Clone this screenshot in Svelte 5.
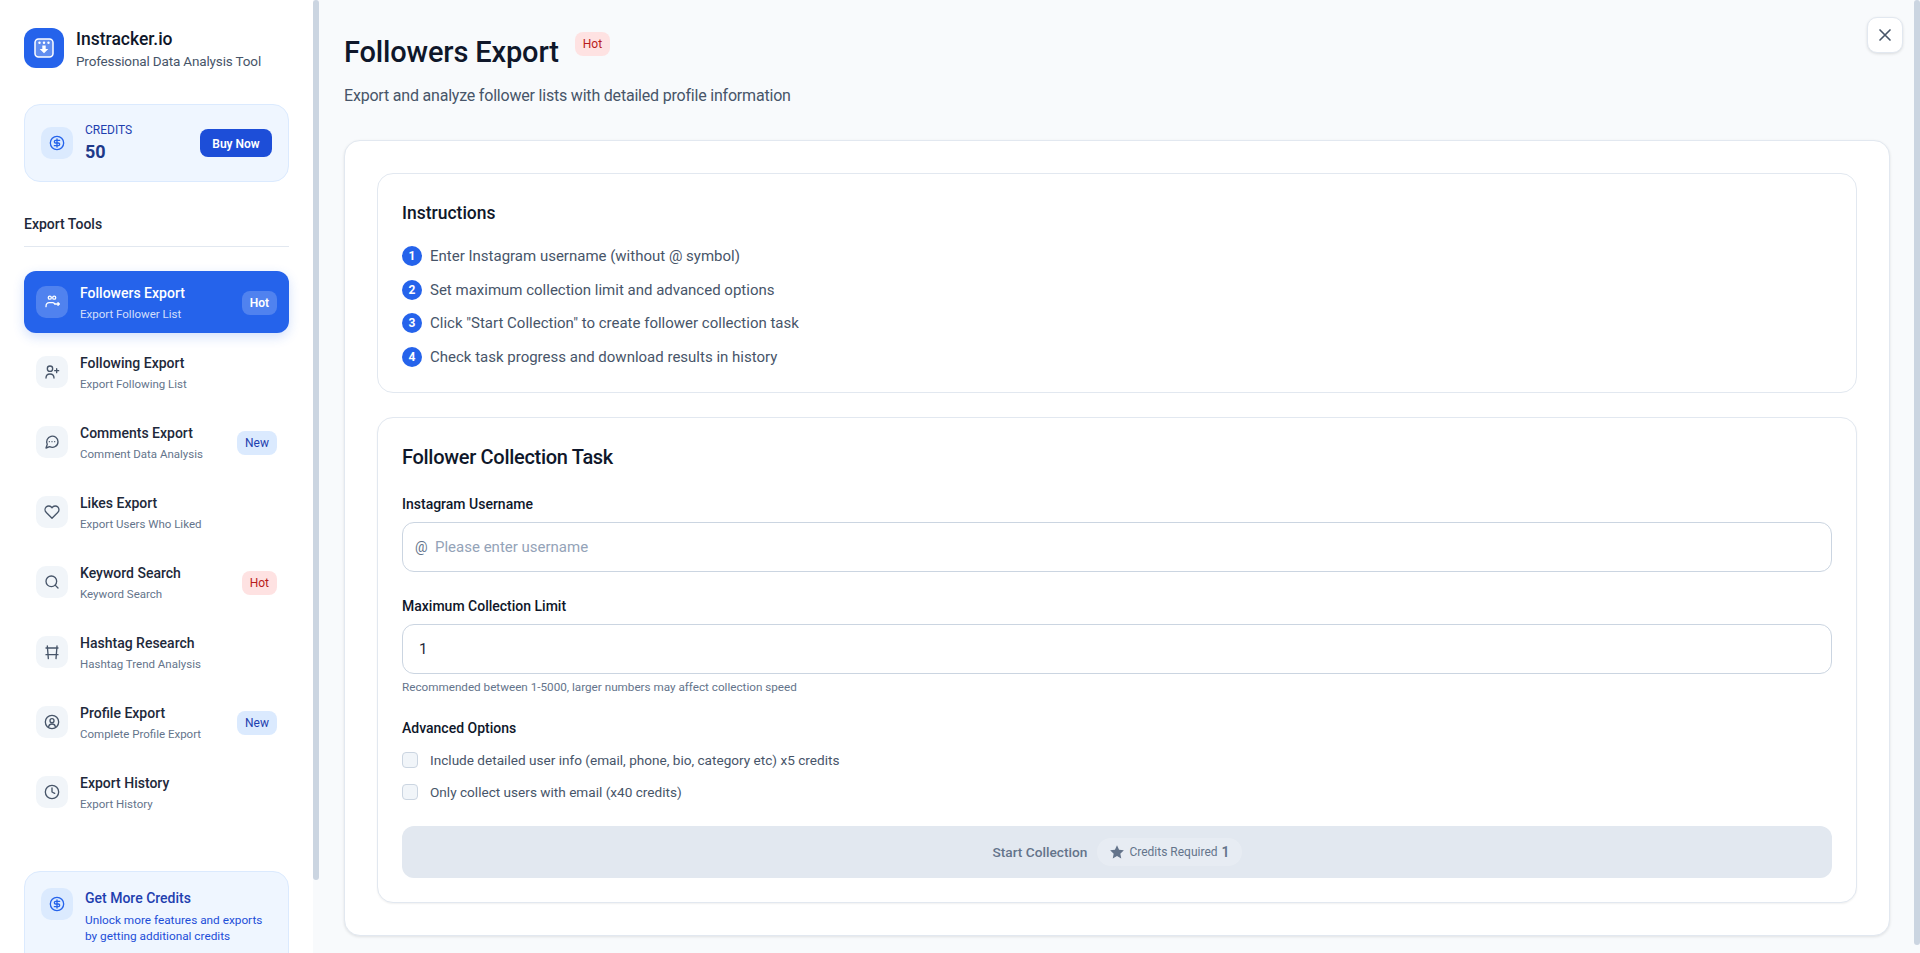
<script>
  const dollar = ['M22 12a10 10 0 1 1-20 0a10 10 0 1 1 20 0', 'M16 8h-6a2 2 0 1 0 0 4h4a2 2 0 1 1 0 4H8', 'M12 18V6'];
  const items = [
    { t: 'Followers Export', s: 'Export Follower List', b: 'Hot', k: 'glass', active: true, d: ['M11 5.500a2.300 2.300 0 1 1-4.600 0a2.300 2.300 0 1 1 4.600 0', 'M17.600 5.500a2.300 2.300 0 1 1-4.600 0a2.300 2.300 0 1 1 4.600 0', 'M3 19c0-4 2-6 5-6h5c1 0 2 .5 3 1.500', 'M16 15h7M21 13l2 2-2 2'] },
    { t: 'Following Export', s: 'Export Following List', d: ['M15 21c0-3.500-2.500-6-6-6s-6 2.500-6 6', 'M13 7a4 4 0 1 1-8 0a4 4 0 1 1 8 0', 'M19 7v6M16 10h6'] },
    { t: 'Comments Export', s: 'Comment Data Analysis', b: 'New', k: 'new', d: ['M21 11.500a8.500 8.500 0 0 1-12.500 7.500L3 21l1.900-5.500A8.500 8.500 0 1 1 21 11.500z', 'M8 11.500h.01M12 11.500h.01M16 11.500h.01'] },
    { t: 'Likes Export', s: 'Export Users Who Liked', d: ['M20.800 4.600a5.500 5.500 0 0 0-7.800 0L12 5.700l-1-1.100a5.500 5.500 0 0 0-7.800 7.800l1 1.100L12 21.300l7.800-7.800 1-1.100a5.500 5.500 0 0 0 0-7.800z'] },
    { t: 'Keyword Search', s: 'Keyword Search', b: 'Hot', k: 'hot', d: ['M19 11a8 8 0 1 1-16 0a8 8 0 1 1 16 0', 'M21 21l-4.300-4.300'] },
    { t: 'Hashtag Research', s: 'Hashtag Trend Analysis', d: ['M3 6h18M3 16h18M5 3l1.500 19M19.500 3L18 22'] },
    { t: 'Profile Export', s: 'Complete Profile Export', b: 'New', k: 'new', d: ['M22 12a10 10 0 1 1-20 0a10 10 0 1 1 20 0', 'M15 10a3 3 0 1 1-6 0a3 3 0 1 1 6 0', 'M7 19c.5-2.500 2.500-4 5-4s4.500 1.500 5 4'] },
    { t: 'Export History', s: 'Export History', d: ['M22 12a10 10 0 1 1-20 0a10 10 0 1 1 20 0', 'M12 6v6l4 2'] }
  ];
  const steps = [
    'Enter Instagram username (without @ symbol)',
    'Set maximum collection limit and advanced options',
    'Click "Start Collection" to create follower collection task',
    'Check task progress and download results in history'
  ];
</script>

{#snippet icon(paths, cls = 'ico')}
  <svg class={cls} viewBox="0 0 24 24" fill="none" stroke="currentColor" stroke-width="2" stroke-linecap="round" stroke-linejoin="round" aria-hidden="true">
    {#each paths as p}<path d={p} />{/each}
  </svg>
{/snippet}

<div class="app">
  <aside class="side">
    <div class="side-in">
      <div class="brand">
        <div class="logo">
          <svg viewBox="0 0 20 20" width="20" height="20" aria-hidden="true">
            <rect x="1" y="1" width="18" height="18" rx="3.500" fill="#fff" fill-opacity=".28" stroke="#fff" stroke-width="1.500" />
            <circle cx="5.500" cy="4.800" r="1.200" fill="#fff" /><circle cx="10" cy="4.800" r="1.200" fill="#fff" /><circle cx="14.500" cy="4.800" r="1.200" fill="#fff" />
            <path d="M8.300 7.500h3.400v3.500h2.600L10 15.300 5.700 11h2.600z" fill="#fff" />
          </svg>
        </div>
        <div class="brand-t">
          <div class="name">Instracker.io</div>
          <div class="tag">Professional Data Analysis Tool</div>
        </div>
      </div>

      <div class="credits">
        <div class="cr-ico">{@render icon(dollar)}</div>
        <div class="cr-txt">
          <div class="cr-label">CREDITS</div>
          <div class="cr-num">50</div>
        </div>
        <button class="buy">Buy Now</button>
      </div>

      <div class="sec">Export Tools</div>

      <nav class="nav">
        {#each items as it}
          <div class="item" class:active={it.active}>
            <div class="it-ico">{@render icon(it.d)}</div>
            <div class="it-txt">
              <div class="it-t">{it.t}</div>
              <div class="it-s">{it.s}</div>
            </div>
            {#if it.b}<span class="badge {it.k}">{it.b}</span>{/if}
          </div>
        {/each}
      </nav>

      <div class="more">
        <div class="cr-ico">{@render icon(dollar)}</div>
        <div>
          <div class="more-t">Get More Credits</div>
          <div class="more-d">Unlock more features and exports by getting additional credits</div>
        </div>
      </div>
    </div>
    <div class="track"><div class="thumb side-thumb"></div></div>
  </aside>

  <main class="main">
    <button class="close" aria-label="Close">
      <svg viewBox="0 0 24 24" width="20" height="20" fill="none" stroke="currentColor" stroke-width="2" stroke-linecap="round" aria-hidden="true"><path d="M18 6L6 18M6 6l12 12" /></svg>
    </button>
    <header class="head">
      <div class="title-row">
        <h1>Followers Export</h1>
        <span class="badge hot">Hot</span>
      </div>
      <p class="lead">Export and analyze follower lists with detailed profile information</p>
    </header>

    <section class="outer">
      <div class="panel instr">
        <h3>Instructions</h3>
        <ol>
          {#each steps as s, i}
            <li><span class="num">{i + 1}</span><span>{s}</span></li>
          {/each}
        </ol>
      </div>

      <div class="panel form">
        <h2>Follower Collection Task</h2>
        <label class="lbl" for="u">Instagram Username</label>
        <div class="field">
          <span class="at">@</span>
          <input id="u" class="inp with-at" placeholder="Please enter username" />
        </div>
        <label class="lbl second" for="m">Maximum Collection Limit</label>
        <div class="field"><input id="m" class="inp" value="1" /></div>
        <div class="help">Recommended between 1-5000, larger numbers may affect collection speed</div>
        <div class="lbl adv">Advanced Options</div>
        <label class="chk"><input type="checkbox" /><span>Include detailed user info (email, phone, bio, category etc) x5 credits</span></label>
        <label class="chk"><input type="checkbox" /><span>Only collect users with email (x40 credits)</span></label>
        <button class="start">
          <span>Start Collection</span>
          <span class="pill">
            <svg viewBox="0 0 24 24" width="16" height="16" fill="currentColor" aria-hidden="true"><path d="M12 2l3.100 6.600 7.200.9-5.300 5 1.400 7.100L12 18.100l-6.400 3.500L7 14.500l-5.300-5 7.200-.9z" /></svg>
            <span class="pill-t">Credits Required</span>
            <b>1</b>
          </span>
        </button>
      </div>
    </section>
    <div class="track main-track"><div class="thumb main-thumb"></div></div>
  </main>
</div>

<style>
  :global(body) { margin: 0; font-family: Roboto, "Noto Sans", sans-serif; background: #f8fafc; color: #0f172a; overflow: hidden; }
  * { box-sizing: border-box; }
  button, input { font-family: inherit; }
  .app { display: flex; height: 953px; }

  .side { position: relative; width: 320px; flex: none; height: 100%; background: #fff; overflow: hidden; }
  .side-in { padding: 28px 24px 24px 24px; width: 313px; }
  .track { position: absolute; top: 0; right: 0; bottom: 0; width: 7px; background: #f8fafc; }
  .main-track { width: 6px; }
  .thumb { width: 6px; background: #cbd5e1; border-radius: 3px; }
  .side-thumb { height: 880px; }
  .main-thumb { height: 945px; }

  .brand { display: flex; align-items: center; gap: 12px; height: 40px; }
  .brand-t { padding-top: 2px; }
  .logo { width: 40px; height: 40px; border-radius: 12px; background: #2563eb; display: flex; align-items: center; justify-content: center; }
  .name { font-size: 17.500px; font-weight: 500; line-height: 24px; color: #0f172a; }
  .tag { font-size: 13.500px; letter-spacing: -.15px; line-height: 20px; color: #475569; }

  .credits { margin-top: 36px; height: 78px; border: 1px solid #dbeafe; border-radius: 16px; background: #eff6ff; display: flex; align-items: center; padding: 0 16px; }
  .cr-ico { width: 32px; height: 32px; flex: none; border-radius: 10px; background: #dbeafe; color: #2563eb; display: flex; align-items: center; justify-content: center; }
  .cr-txt { margin-left: 12px; flex: 1; }
  .cr-label { font-size: 12px; line-height: 16px; color: #1e40af; }
  .cr-num { font-size: 18px; font-weight: 700; line-height: 24px; margin-top: 2px; color: #1e3a8a; }
  .buy { width: 72px; height: 28px; border: 0; border-radius: 8px; background: #1d4ed8; color: #fff; font-weight: 600; font-size: 12px; padding: 1px 0 0; }

  .sec { margin-top: 32px; font-size: 14px; font-weight: 500; line-height: 20px; color: #1e293b; padding-bottom: 12px; border-bottom: 1px solid #e2e8f0; }
  .nav { margin-top: 24px; display: flex; flex-direction: column; gap: 8px; }
  .item { height: 62px; border-radius: 12px; display: flex; align-items: center; padding: 0 12px; }
  .item.active { background: #2563eb; color: #fff; box-shadow: 0 4px 12px rgba(37, 99, 235, .2); }
  .it-ico { width: 32px; height: 32px; flex: none; border-radius: 10px; background: #f1f5f9; color: #475569; display: flex; align-items: center; justify-content: center; }
  .active .it-ico { background: rgba(255, 255, 255, .2); color: #fff; }
  .ico { width: 16px; height: 16px; }
  .it-txt { margin-left: 12px; flex: 1; min-width: 0; }
  .it-t { font-size: 14px; font-weight: 500; line-height: 20px; color: #1e293b; }
  .it-s { font-size: 11.500px; line-height: 16px; margin-top: 3px; color: #64748b; }
  .active .it-t { color: #fff; }
  .active .it-s { color: rgba(255, 255, 255, .8); }

  .badge { font-size: 12px; font-weight: 400; line-height: 24px; height: 24px; padding: 0 8px; border-radius: 8px; flex: none; }
  .item .badge { margin-top: 2px; }
  .glass { background: rgba(255, 255, 255, .2); color: #fff; font-weight: 600; }
  .new { background: #dbeafe; color: #1e40af; }
  .hot { background: #fee2e2; color: #b91c1c; }

  .more { margin-top: 48px; height: 160px; border: 1px solid #dbeafe; border-radius: 16px; background: #eff6ff; display: flex; gap: 12px; padding: 16px; }
  .more-t { font-size: 14px; font-weight: 500; line-height: 20px; color: #1e40af; }
  .more-d { margin-top: 4px; font-size: 11.800px; line-height: 16px; color: #1d4ed8; }

  .main { flex: 1; min-width: 0; height: 100%; overflow: hidden; padding: 24px 30px 24px 24px; position: relative; background: #f8fafc; }
  .close { position: absolute; top: 17px; right: 17px; width: 36px; height: 36px; border-radius: 10px; background: #fff; border: 1px solid #e2e8f0; box-shadow: 0 1px 3px rgba(0, 0, 0, .12); color: #475569; padding: 0; display: flex; align-items: center; justify-content: center; }
  .head { height: 116px; padding-top: 8px; }
  .title-row { display: flex; align-items: flex-start; gap: 16px; height: 36px; }
  h1 { margin: 1px 0 0; font-size: 29px; letter-spacing: -.15px; font-weight: 500; line-height: 38px; color: #0f172a; }
  .lead { margin: 16px 0 0; font-size: 16px; letter-spacing: -.2px; line-height: 24px; color: #475569; }

  .outer { border: 1px solid #e2e8f0; border-radius: 16px; background: #fff; box-shadow: 0 1px 3px rgba(0, 0, 0, .1); padding: 32px; }
  .panel { border: 1px solid #e2e8f0; border-radius: 16px; background: #fff; padding: 24px; }
  .instr { height: 220px; margin-bottom: 24px; }
  h3 { margin: 1px 0 -1px; font-size: 17.500px; font-weight: 500; line-height: 28px; color: #0f172a; }
  ol { list-style: none; margin: 18px 0 0; padding: 0; display: flex; flex-direction: column; gap: 9.600px; }
  li { display: flex; align-items: center; gap: 8px; font-size: 15px; line-height: 24px; color: #475569; }
  .num { width: 20px; height: 20px; border-radius: 50%; background: #2563eb; color: #fff; font-size: 12px; font-weight: 700; display: flex; align-items: center; justify-content: center; }

  .form { height: 486px; box-shadow: 0 1px 2px rgba(0, 0, 0, .06); }
  h2 { margin: 1px 0 0; font-size: 20px; letter-spacing: -.3px; font-weight: 500; line-height: 28px; color: #0f172a; }
  .lbl { display: block; font-size: 14px; font-weight: 500; line-height: 20px; color: #0f172a; margin-top: 23px; margin-bottom: 8px; }
  .lbl.second { margin-top: 24px; }
  .lbl.adv { margin-top: 23px; margin-bottom: 0; }
  .field { position: relative; }
  .at { position: absolute; left: 13px; top: 0; line-height: 50px; font-size: 14px; color: #64748b; }
  .inp { width: 100%; height: 50px; border: 1px solid #cbd5e1; border-radius: 12px; background: #fff; padding: 0 16px; font-size: 15px; color: #1e293b; outline: none; }
  .inp.with-at { padding-left: 32px; }
  .inp::placeholder { color: #94a3b8; }
  .help { margin-top: 5px; font-size: 11.700px; line-height: 16px; color: #64748b; }
  .chk { display: flex; align-items: center; gap: 12px; height: 32px; font-size: 13.600px; color: #475569; }
  .adv + .chk { margin-top: 6px; }
  .chk input { appearance: none; width: 16px; height: 16px; margin: 0; border: 1px solid #cbd5e1; border-radius: 4px; background: #f1f5f9; flex: none; }
  .start { width: 100%; height: 52px; margin-top: 18px; border: 0; border-radius: 12px; background: #e2e8f0; color: #64748b; font-weight: 500; font-size: 13.700px; display: flex; align-items: center; justify-content: center; gap: 10px; padding: 0; }
  .pill { display: flex; align-items: center; gap: 4px; height: 28px; padding: 0 12px; border-radius: 14px; background: rgba(255, 255, 255, .2); }
  .pill-t { font-size: 12px; font-weight: 400; }
  .pill b { font-size: 14px; font-weight: 600; }
</style>
